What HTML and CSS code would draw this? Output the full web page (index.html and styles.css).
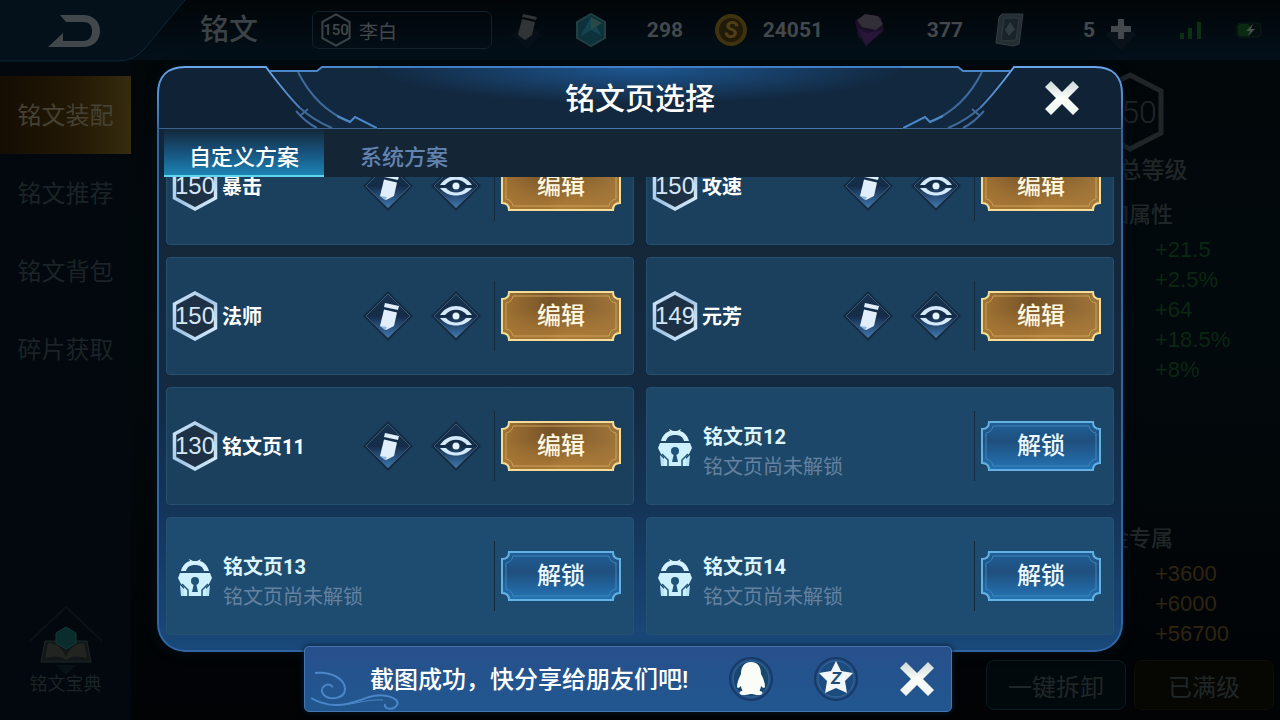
FILE: index.html
```
<!DOCTYPE html>
<html lang="zh-CN">
<head>
  <meta charset="UTF-8" />
  <meta name="viewport" content="width=device-width, initial-scale=1.0" />
  <title>铭文</title>
  <link rel="stylesheet" href="styles.css">
</head>
<body>
  <!-- shared shapes -->
  <svg class="defs" width="0" height="0" aria-hidden="true">
    <defs>
      <linearGradient id="hexLine" x1="0" y1="0" x2="1" y2="1">
        <stop offset="0" stop-color="#d3e9fb"/><stop offset=".5" stop-color="#9fc4e6"/><stop offset="1" stop-color="#dff3ff"/>
      </linearGradient>
      <linearGradient id="diamondFill" x1="0" y1="0" x2="0" y2="1">
        <stop offset="0" stop-color="#17334f"/><stop offset=".5" stop-color="#142c48"/><stop offset="1" stop-color="#3f78b4"/>
      </linearGradient>
      <linearGradient id="goldFill" x1="0" y1="0" x2="1" y2="0">
        <stop offset="0" stop-color="#a27434"/><stop offset=".4" stop-color="#775328"/><stop offset="1" stop-color="#a0763a"/>
      </linearGradient>
      <radialGradient id="goldGlow" cx=".5" cy="1" r=".7">
        <stop offset="0" stop-color="#c8903f" stop-opacity=".7"/><stop offset="1" stop-color="#c8903f" stop-opacity="0"/>
      </radialGradient>
      <linearGradient id="blueFill" x1="0" y1="0" x2="0" y2="1">
        <stop offset="0" stop-color="#205f97"/><stop offset=".4" stop-color="#1f4f7d"/><stop offset="1" stop-color="#2474b5"/>
      </linearGradient>
      <linearGradient id="topLine" x1="0" y1="0" x2="0" y2="1">
        <stop offset="0" stop-color="#69a6ea"/><stop offset="1" stop-color="#3d6ca4"/>
      </linearGradient>
      <linearGradient id="cross" x1="0" y1="0" x2="0" y2="1">
        <stop offset="0" stop-color="#ccd9db"/><stop offset=".5" stop-color="#fbfdf8"/><stop offset="1" stop-color="#eef5f2"/>
      </linearGradient>
    </defs>
    <symbol id="hex" viewBox="0 0 46 50">
      <path d="M23 2L43.500 13V37L23 48L2.500 37V13Z" fill="#1d3044" stroke="url(#hexLine)" stroke-width="3.500"/>
    </symbol>
    <symbol id="pencil" viewBox="0 0 50 50">
      <path d="M25 0L50 25L25 50L0 25Z" fill="#132b43"/>
      <path d="M25 3L47 25L25 47L3 25Z" fill="url(#diamondFill)" stroke="#3b5872"/>
      <path d="M22 12L36 15L35 19L21 16Z" fill="#e1effa"/>
      <path d="M21 18.500L34 21.500L31 35L23 39L17 35Z" fill="#e1effa"/>
      <path d="M17 35L24 36L22 39Z" fill="#8fb8de"/>
    </symbol>
    <symbol id="eye" viewBox="0 0 50 50">
      <path d="M25 0L50 25L25 50L0 25Z" fill="#132b43"/>
      <path d="M25 3L47 25L25 47L3 25Z" fill="url(#diamondFill)" stroke="#3b5872"/>
      <path d="M9 24C17 12 33 12 41 24H36C30 17 20 17 14 24Z" fill="#d4eafb"/>
      <path d="M9 27H15C20 33 30 33 35 27H41C33 37 17 37 9 27Z" fill="#d4eafb"/>
      <circle cx="25" cy="25" r="3.500" fill="#e3f4ff"/>
    </symbol>
    <symbol id="lock" viewBox="0 0 34 38">
      <path d="M3 12C4 7 8 3 12 2L11 0L15 2H19L23 0L22 2C26 3 30 7 31 12H26C25 8 22 6 17 6S9 8 8 12Z" fill="#d3f1ff"/>
      <path d="M2 14H32L34 19L31 25L28 28V37H6V28L3 25L0 19Z" fill="#cdf0ff"/>
      <path d="M2 26L6 30V37H3ZM32 26L28 30V37H31Z" fill="#b8e4fb"/>
      <path d="M4 25L10 31V38M30 25L24 31V38" fill="none" stroke="#1f5378" stroke-width="1.500"/>
      <circle cx="17" cy="22" r="4" fill="#1f5378"/>
      <path d="M16 24H18L20 33H14Z" fill="#1f5378"/>
    </symbol>
    <symbol id="goldFrame" viewBox="0 0 120 50">
      <path d="M8 1H112Q112 8 119 8V42Q112 42 112 49H8Q8 42 1 42V8Q8 8 8 1Z" fill="url(#goldFill)"/>
      <path d="M8 1H112Q112 8 119 8V42Q112 42 112 49H8Q8 42 1 42V8Q8 8 8 1Z" fill="url(#goldGlow)" stroke="#f2dc97" stroke-width="2"/>
      <path d="M12 5H108Q109 11 115 12V38Q109 39 108 45H12Q11 39 5 38V12Q11 11 12 5Z" fill="none" stroke="#c9a25a"/>
    </symbol>
    <symbol id="blueFrame" viewBox="0 0 120 50">
      <path d="M8 1H112Q112 8 119 8V42Q112 42 112 49H8Q8 42 1 42V8Q8 8 8 1Z" fill="url(#blueFill)" stroke="#62b1e2" stroke-width="2"/>
      <path d="M12 5H108Q109 11 115 12V38Q109 39 108 45H12Q11 39 5 38V12Q11 11 12 5Z" fill="none" stroke="#3f86bd"/>
    </symbol>
    <symbol id="close" viewBox="0 0 36 36">
      <path d="M7 1L18 12L29 1L35 7L24 18L35 29L29 35L18 24L7 35L1 29L12 18L1 7Z" fill="url(#cross)"/>
    </symbol>
    <symbol id="corner" viewBox="0 0 220 63">
      <path d="M1 63V28C1 10 11 1 28 1H109L115 5H160L165 1H220V63Z" fill="#102236"/>
      <path d="M115 5H160L165 1H220V62H175C155 52 135 32 115 5Z" fill="#12283f"/>
      <path d="M1 63V28C1 10 11 1 28 1H109C121 17 132 31 143 42" fill="none" stroke="url(#topLine)" stroke-width="2"/>
      <path d="M143 42C153 51 163 57 175 62M139 45C146 53 152 58 160 62M144 49L151 43M141 6C152 28 168 46 193 56" fill="none" stroke="#3f6a9b" stroke-width="2"/>
      <path d="M180 50L193 56L198 51L220 62M113 5H160L165 1H220" fill="none" stroke="#4c87c8" stroke-width="2"/>
      <path d="M0 62.500H220" stroke="#3a6390"/>
    </symbol>
  </svg>

  <header class="topbar">
    <button class="back" type="button" aria-label="返回">
      <svg class="back-bg" viewBox="0 0 200 62"><path d="M0 0H185L145 48Q134 61 118 61H0Z" fill="#04111b"/><path d="M185 0L145 48Q134 61 118 61H0" fill="none" stroke="#0b2835"/></svg>
      <svg class="back-arrow" viewBox="0 0 52 34"><path d="M12 1H35C46 1 52 8 52 17S46 33 35 33H0L15 19V27H35C41 27 44 23 44 17S41 8 35 8H18Z" fill="#40484b"/></svg>
    </button>
    <h1>铭文</h1>
    <div class="current-page">
      <span class="mini-hex"><svg viewBox="0 0 46 50"><path d="M23 2L43 13V37L23 48L3 37V13Z" fill="none" stroke="#3a4348" stroke-width="3"/></svg><span>150</span></span>
      李白
    </div>
    <button class="rename" type="button" aria-label="改名">
      <svg viewBox="0 0 30 40"><path d="M15 12L30 25L15 39L0 25Z" fill="#071018"/><path d="M11 4L25 7L24 10L10 7ZM10 9L23 12L20 25L13 30L6 25Z" fill="#303437"/></svg>
    </button>
    <div class="currency">
      <svg viewBox="0 0 34 34"><path d="M17 1L31 9V25L17 33L3 25V9Z" fill="#0e323b" stroke="#223f42" stroke-width="2"/><path d="M17 4L28 23L17 17L6 24Z" fill="#144450"/><path d="M17 4V17L28 10Z" fill="#2a4944"/></svg>
      <span>298</span>
    </div>
    <div class="currency">
      <svg viewBox="0 0 34 34"><circle cx="17" cy="17" r="14" fill="#211a09" stroke="#3f320f" stroke-width="4"/><text x="17" y="25" text-anchor="middle" class="coin-mark">S</text></svg>
      <span>24051</span>
    </div>
    <div class="currency">
      <svg viewBox="0 0 34 34"><path d="M1 8L12 2L27 4L30 18L12 33L4 23Z" fill="#1c1029"/><path d="M3 7L11 1L24 3L29 11L22 17L8 14Z" fill="#332f39"/><path d="M4 15L12 20L29 17L12 33Z" fill="#281638"/></svg>
      <span>377</span>
    </div>
    <div class="currency last">
      <svg viewBox="0 0 34 34"><path d="M8 1H29L25 31L19 33L2 30L5 4Z" fill="#232d32" stroke="#343d41"/><path d="M10 5H25L22 27L7 28Z" fill="#182429" stroke="#2f3a40"/><path d="M16 9L21 16L15 23L11 17Z" fill="#313c42"/></svg>
      <span>5</span>
    </div>
    <button class="plus" type="button" aria-label="购买">
      <svg viewBox="0 0 30 44"><path d="M15 12L30 27L15 42L0 27Z" fill="#091119"/><path d="M12 11H18V18H25V24H18V31H12V24H5V18H12Z" fill="#42484b"/></svg>
    </button>
    <div class="status">
      <svg width="26" height="20" viewBox="0 0 26 20"><path d="M2 13H6V19H2ZM10 8H14V19H10ZM19 2H23V19H19Z" fill="#0b3012"/></svg>
      <svg width="28" height="20" viewBox="0 0 28 20"><rect x="1" y="3" width="24" height="14" rx="4" fill="#04100f" stroke="#0c1a18"/><rect x="2" y="4" width="12" height="12" rx="3" fill="#0b2a12"/><path d="M17 4L10 11H14L12 16L19 9H15Z" fill="#46514c"/></svg>
    </div>
  </header>

  <main>
    <nav class="sidebar">
      <a class="active" href="#">铭文装配</a>
      <a href="#">铭文推荐</a>
      <a href="#">铭文背包</a>
      <a href="#">碎片获取</a>
      <a class="codex" href="#">
        <svg viewBox="0 0 72 72"><path d="M0 36L36 2L72 36" fill="none" stroke="#0a1215" stroke-width="2"/><path d="M15 36H57L61 57H11Z" fill="#121819" stroke="#1f2627"/><path d="M18 38Q30 38 36 52Q42 38 54 38L57 53Q43 49 36 55Q29 49 15 53Z" fill="#22241f"/><path d="M36 22L46 28V38L36 44L26 38V28Z" fill="#0a2c2c" stroke="#123838"/><path d="M26 60H46L36 70Z" fill="#071216"/></svg>
        铭文宝典
      </a>
    </nav>
    <aside class="stats">
      <div class="total"><svg viewBox="0 0 68 80"><path d="M34 3L65 19V61L34 77L3 61V19Z" fill="none" stroke="#202527" stroke-width="5"/></svg><span>150</span></div>
      <p class="total-label">铭文总等级</p>
      <h2>附加属性</h2>
      <ul>
        <li>+21.5</li>
        <li>+2.5%</li>
        <li>+64</li>
        <li>+18.5%</li>
        <li>+8%</li>
      </ul>
      <h2 class="exclusive">黄金专属</h2>
      <ul class="gold">
        <li>+3600</li>
        <li>+6000</li>
        <li>+56700</li>
      </ul>
      <div class="actions">
        <button type="button">一键拆卸</button>
        <button class="full" type="button">已满级</button>
      </div>
    </aside>
  </main>

  <div class="overlay">
    <section class="dialog" role="dialog" aria-labelledby="dialogTitle">
      <div class="dialog-head">
        <svg class="corner"><use href="#corner"/></svg>
        <h2 id="dialogTitle">铭文页选择</h2>
        <svg class="corner right"><use href="#corner"/></svg>
        <button class="dialog-close" type="button" aria-label="关闭"><svg viewBox="0 0 36 36"><use href="#close"/></svg></button>
      </div>
      <div class="dialog-body">
        <div class="tabs" role="tablist">
          <button class="tab active" type="button" role="tab" aria-selected="true">自定义方案</button>
          <button class="tab" type="button" role="tab" aria-selected="false">系统方案</button>
        </div>
        <div class="pages">
          <article class="page">
            <div class="hex"><svg><use href="#hex"/></svg><span>150</span></div>
            <h3>暴击</h3>
            <button class="icon" type="button" aria-label="改名"><svg><use href="#pencil"/></svg></button>
            <button class="icon" type="button" aria-label="查看"><svg><use href="#eye"/></svg></button>
            <div class="action"><button class="btn gold" type="button"><svg><use href="#goldFrame"/></svg><span>编辑</span></button></div>
          </article>
          <article class="page">
            <div class="hex"><svg><use href="#hex"/></svg><span>150</span></div>
            <h3>攻速</h3>
            <button class="icon" type="button" aria-label="改名"><svg><use href="#pencil"/></svg></button>
            <button class="icon" type="button" aria-label="查看"><svg><use href="#eye"/></svg></button>
            <div class="action"><button class="btn gold" type="button"><svg><use href="#goldFrame"/></svg><span>编辑</span></button></div>
          </article>
          <article class="page">
            <div class="hex"><svg><use href="#hex"/></svg><span>150</span></div>
            <h3>法师</h3>
            <button class="icon" type="button" aria-label="改名"><svg><use href="#pencil"/></svg></button>
            <button class="icon" type="button" aria-label="查看"><svg><use href="#eye"/></svg></button>
            <div class="action"><button class="btn gold" type="button"><svg><use href="#goldFrame"/></svg><span>编辑</span></button></div>
          </article>
          <article class="page">
            <div class="hex"><svg><use href="#hex"/></svg><span>149</span></div>
            <h3>元芳</h3>
            <button class="icon" type="button" aria-label="改名"><svg><use href="#pencil"/></svg></button>
            <button class="icon" type="button" aria-label="查看"><svg><use href="#eye"/></svg></button>
            <div class="action"><button class="btn gold" type="button"><svg><use href="#goldFrame"/></svg><span>编辑</span></button></div>
          </article>
          <article class="page">
            <div class="hex"><svg><use href="#hex"/></svg><span>130</span></div>
            <h3>铭文页11</h3>
            <button class="icon" type="button" aria-label="改名"><svg><use href="#pencil"/></svg></button>
            <button class="icon" type="button" aria-label="查看"><svg><use href="#eye"/></svg></button>
            <div class="action"><button class="btn gold" type="button"><svg><use href="#goldFrame"/></svg><span>编辑</span></button></div>
          </article>
          <article class="page locked">
            <svg class="lock"><use href="#lock"/></svg>
            <div class="text"><h3>铭文页12</h3><p>铭文页尚未解锁</p></div>
            <div class="action"><button class="btn" type="button"><svg><use href="#blueFrame"/></svg><span>解锁</span></button></div>
          </article>
          <article class="page locked">
            <svg class="lock"><use href="#lock"/></svg>
            <div class="text"><h3>铭文页13</h3><p>铭文页尚未解锁</p></div>
            <div class="action"><button class="btn" type="button"><svg><use href="#blueFrame"/></svg><span>解锁</span></button></div>
          </article>
          <article class="page locked">
            <svg class="lock"><use href="#lock"/></svg>
            <div class="text"><h3>铭文页14</h3><p>铭文页尚未解锁</p></div>
            <div class="action"><button class="btn" type="button"><svg><use href="#blueFrame"/></svg><span>解锁</span></button></div>
          </article>
        </div>
      </div>
    </section>
  </div>

  <div class="toast" role="status">
    <svg class="cloud" viewBox="0 0 96 44"><g fill="none" stroke="#4b86c8" stroke-width="2"><path d="M6 6C22 4 36 12 36 22C36 32 20 34 14 27C10 21 18 14 24 20"/><path d="M2 31C24 44 44 36 60 30C76 25 92 32 88 38C84 44 74 42 76 37"/><path d="M34 38C50 36 60 32 74 33" stroke-width="1"/></g></svg>
    <p>截图成功，快分享给朋友们吧!</p>
    <button type="button" aria-label="分享到QQ">
      <svg viewBox="0 0 44 44"><circle cx="22" cy="22" r="21" fill="#204f86" stroke="#173a68" stroke-width="2"/><circle cx="22" cy="22" r="18" fill="#17466f" stroke="#3a6898"/><path d="M22 5C29 5 32 10 32 17C34 21 36 25 36 30C35 32 33 30 32 29C32 32 30 33 31 34C35 35 34 38 29 38C25 38 24 37 22 37C20 37 19 38 15 38C10 38 9 35 13 34C14 33 12 32 12 29C11 30 9 32 8 30C8 25 10 21 12 17C12 10 15 5 22 5Z" fill="#fafcf7"/></svg>
    </button>
    <button type="button" aria-label="分享到空间">
      <svg viewBox="0 0 44 44"><circle cx="22" cy="22" r="21" fill="#204f86" stroke="#173a68" stroke-width="2"/><circle cx="22" cy="22" r="18" fill="#1b4c7d" stroke="#3a6898"/><path d="M22 4L27 14L39 16L31 24L33 36L22 31L11 36L13 24L5 16L17 14Z" fill="#f2f8fa"/><text x="22" y="27" text-anchor="middle" class="star-mark">Z</text></svg>
    </button>
    <button class="toast-close" type="button" aria-label="关闭"><svg viewBox="0 0 36 36"><use href="#close"/></svg></button>
  </div>
</body>
</html>
```
FILE: styles.css
```
* {
  box-sizing: border-box;
}
body {
  margin: 0;
  min-height: 100vh;
  display: flex;
  flex-direction: column;
  position: relative;
  overflow: hidden;
  background: linear-gradient(#010608, #02090d 45%, #010305);
  color: #fff;
  font-family: Roboto, "Noto Sans CJK SC", sans-serif;
}
h1, h2, h3, p, ul {
  margin: 0;
  padding: 0;
  font-weight: 500;
}
ul {
  list-style: none;
}
a {
  text-decoration: none;
}
button {
  padding: 0;
  border: none;
  background: none;
  color: inherit;
  font-family: inherit;
  cursor: pointer;
}
svg {
  display: block;
}
.defs {
  position: absolute;
}

/* top bar */
.topbar {
  display: flex;
  align-items: center;
  height: 60px;
  padding-right: 16px;
  background: linear-gradient(#010507, #03101a);
  color: #42484b;
}
.back {
  position: relative;
  width: 200px;
  height: 60px;
}
.back-bg {
  width: 200px;
  height: 62px;
}
.back-arrow {
  position: absolute;
  left: 48px;
  top: 14px;
  width: 52px;
  height: 34px;
}
.topbar h1 {
  width: 112px;
  font-size: 29px;
  line-height: 40px;
  color: #3c4346;
}
.current-page {
  display: flex;
  align-items: center;
  gap: 7px;
  width: 180px;
  height: 38px;
  padding-left: 7px;
  border: 1px solid #11222c;
  border-radius: 7px;
  font-size: 19px;
}
.mini-hex {
  display: grid;
  place-items: center;
  font-size: 15px;
  font-weight: 500;
}
.mini-hex > *, .hex > *, .total > *, .btn > * {
  grid-area: 1 / 1;
}
.mini-hex svg {
  width: 32px;
  height: 34px;
}
.rename {
  margin: 0 32px 0 20px;
}
.rename svg {
  width: 30px;
  height: 40px;
}
.currency {
  display: flex;
  align-items: center;
  justify-content: space-between;
  width: 110px;
  margin-right: 30px;
  padding-right: 1px;
  font-size: 21px;
  font-weight: 700;
}
.currency svg {
  width: 34px;
  height: 34px;
}
.currency.last {
  width: 102px;
  margin-right: 10px;
}
.coin-mark {
  font: italic bold 23px Roboto, sans-serif;
  fill: #4f3f16;
}
.plus svg {
  width: 30px;
  height: 44px;
}
.status {
  display: flex;
  gap: 32px;
  margin-left: auto;
}

/* page behind the dialog */
main {
  flex: 1;
  display: flex;
  justify-content: space-between;
}
.sidebar {
  display: flex;
  flex-direction: column;
  width: 131px;
  padding-top: 16px;
  background: #02080d;
}
.sidebar a {
  height: 78px;
  font-size: 24px;
  line-height: 80px;
  text-align: center;
  color: #1c2326;
}
.sidebar a.active {
  background: linear-gradient(90deg, #150d03, #231905 60%, #352c10);
  color: #464133;
}
.sidebar a.codex {
  display: flex;
  flex-direction: column;
  align-items: center;
  height: auto;
  margin-top: auto;
  padding-bottom: 21px;
  font-size: 18px;
  line-height: 30px;
}
.codex svg {
  width: 72px;
  height: 72px;
  margin-bottom: -8px;
}
.stats {
  display: flex;
  flex-direction: column;
  width: 294px;
  padding: 12px 6px 10px 0;
  color: #202628;
  font-size: 22px;
  line-height: 30px;
}
.total {
  display: grid;
  place-items: center;
  font: 300 32px Roboto, sans-serif;
}
.total svg {
  width: 68px;
  height: 80px;
}
.total-label {
  margin: 4px 0 14px;
  font-size: 23px;
  text-align: center;
}
.stats h2 {
  padding-left: 99px;
  margin-bottom: 5px;
  font-size: 22px;
}
.stats .exclusive {
  margin-top: auto;
}
.stats ul {
  padding-left: 169px;
  font-family: "Liberation Sans", sans-serif;
  color: #0a2712;
}
.stats .gold {
  color: #2f2410;
}
.actions {
  display: flex;
  gap: 8px;
  margin-top: 11px;
}
.actions button {
  flex: 1;
  height: 50px;
  border: 1px solid #0a1b22;
  border-radius: 8px;
  background: #02090c;
  font-size: 24px;
}
.actions .full {
  border-color: #0e0d06;
  background: #060602;
}

/* dialog */
.overlay {
  position: absolute;
  inset: 0;
  padding: 66px 157px 68px;
}
.dialog {
  display: flex;
  flex-direction: column;
  height: 100%;
  border-radius: 28px;
  box-shadow: 0 0 12px #06101c;
}
.dialog-head {
  position: relative;
  display: flex;
}
.corner {
  width: 220px;
  height: 63px;
}
.corner.right {
  transform: scaleX(-1);
}
.dialog-head h2 {
  flex: 1;
  padding-top: 2px;
  border-top: 2px solid #3f7fc6;
  border-bottom: 1px solid #4879ae;
  background: radial-gradient(ellipse 50% 60% at 50% 0, #1d5792, transparent), #12283f;
  font-size: 30px;
  line-height: 58px;
  text-align: center;
}
.dialog-close {
  position: absolute;
  right: 43px;
  top: 14px;
}
.dialog-close svg, .toast-close svg {
  width: 36px;
  height: 36px;
}
.dialog-body {
  flex: 1;
  min-height: 0;
  display: flex;
  flex-direction: column;
  padding-bottom: 15px;
  border: 2px solid #2f66a3;
  border-top: none;
  border-radius: 0 0 28px 28px;
  background: linear-gradient(#142534, #132a40 50%, #14365a 75%, #19497a);
}
.tabs {
  display: flex;
  padding: 0 5px;
}
.tab {
  width: 160px;
  height: 48px;
  border-bottom: 2px solid transparent;
  font-size: 22px;
  font-weight: 500;
  padding-top: 5px;
  color: #6283b0;
}
.tab.active {
  border-bottom-color: #5fd5f2;
  background: linear-gradient(#14283a, #17527c 50%, #1c84b4);
  color: #fff;
}
/* the list is scrolled to its end */
.pages {
  flex: 1;
  min-height: 0;
  overflow: hidden;
  display: grid;
  grid-template-columns: 1fr 1fr;
  align-content: end;
  gap: 12px;
  padding: 0 7px;
}
.page {
  display: flex;
  align-items: center;
  height: 118px;
  padding: 0 12px 0 5px;
  border: 1px solid #25506f;
  border-radius: 4px;
  background: #1b405d;
}
.page.locked {
  background: #1d4768;
}
.page.locked:nth-last-child(-n+2) {
  background: #1e4c70;
}
.hex {
  display: grid;
  place-items: center;
  font: 24px "Liberation Sans", sans-serif;
  color: #d5e6f5;
}
.hex svg {
  width: 46px;
  height: 50px;
}
.page h3 {
  flex: 1;
  margin-left: 4px;
  padding-top: 2px;
  font-size: 20px;
  line-height: 30px;
  font-weight: 700;
}
.icon {
  margin-right: 18px;
}
.icon svg {
  width: 50px;
  height: 50px;
}
.icon + .icon {
  margin-right: 13px;
}
.action {
  padding: 10px 0 10px 6px;
  border-left: 1px solid #112a40;
}
.btn {
  display: grid;
  place-items: center;
  font-size: 24px;
  line-height: 32px;
  font-weight: 500;
  color: #fff7df;
}
.btn svg {
  width: 120px;
  height: 50px;
}
.locked .btn {
  color: #eaf9ff;
}
.lock {
  width: 34px;
  height: 38px;
  margin: 4px 6px 0;
}
.text {
  flex: 1;
  margin-left: 5px;
  padding-top: 12px;
}
.page .text h3 {
  margin: 0;
  padding: 0;
  color: #dcf5ff;
}
.text p {
  font-size: 20px;
  line-height: 30px;
  font-weight: 400;
  color: #6481a0;
}

/* share toast */
.toast {
  position: absolute;
  left: 304px;
  right: 328px;
  bottom: 8px;
  display: flex;
  align-items: center;
  height: 66px;
  padding: 0 17px 0 65px;
  border: 1px solid #4376b2;
  border-radius: 5px;
  background: linear-gradient(#27508c, #21578f);
  box-shadow: 0 0 6px #0a1a2c;
}
.toast p {
  flex: 1;
  padding-top: 2px;
  font-size: 24px;
  line-height: 36px;
  white-space: nowrap;
}
.toast button {
  margin-left: 41px;
}
.toast .toast-close {
  margin-right: 3px;
}
.toast button svg {
  width: 44px;
  height: 44px;
}
.toast .toast-close svg {
  width: 36px;
  height: 36px;
}
.cloud {
  position: absolute;
  left: 4px;
  bottom: 0;
  width: 96px;
  height: 44px;
}
.star-mark {
  font: italic bold 17px Roboto, sans-serif;
  fill: #1b4c7d;
}
```
